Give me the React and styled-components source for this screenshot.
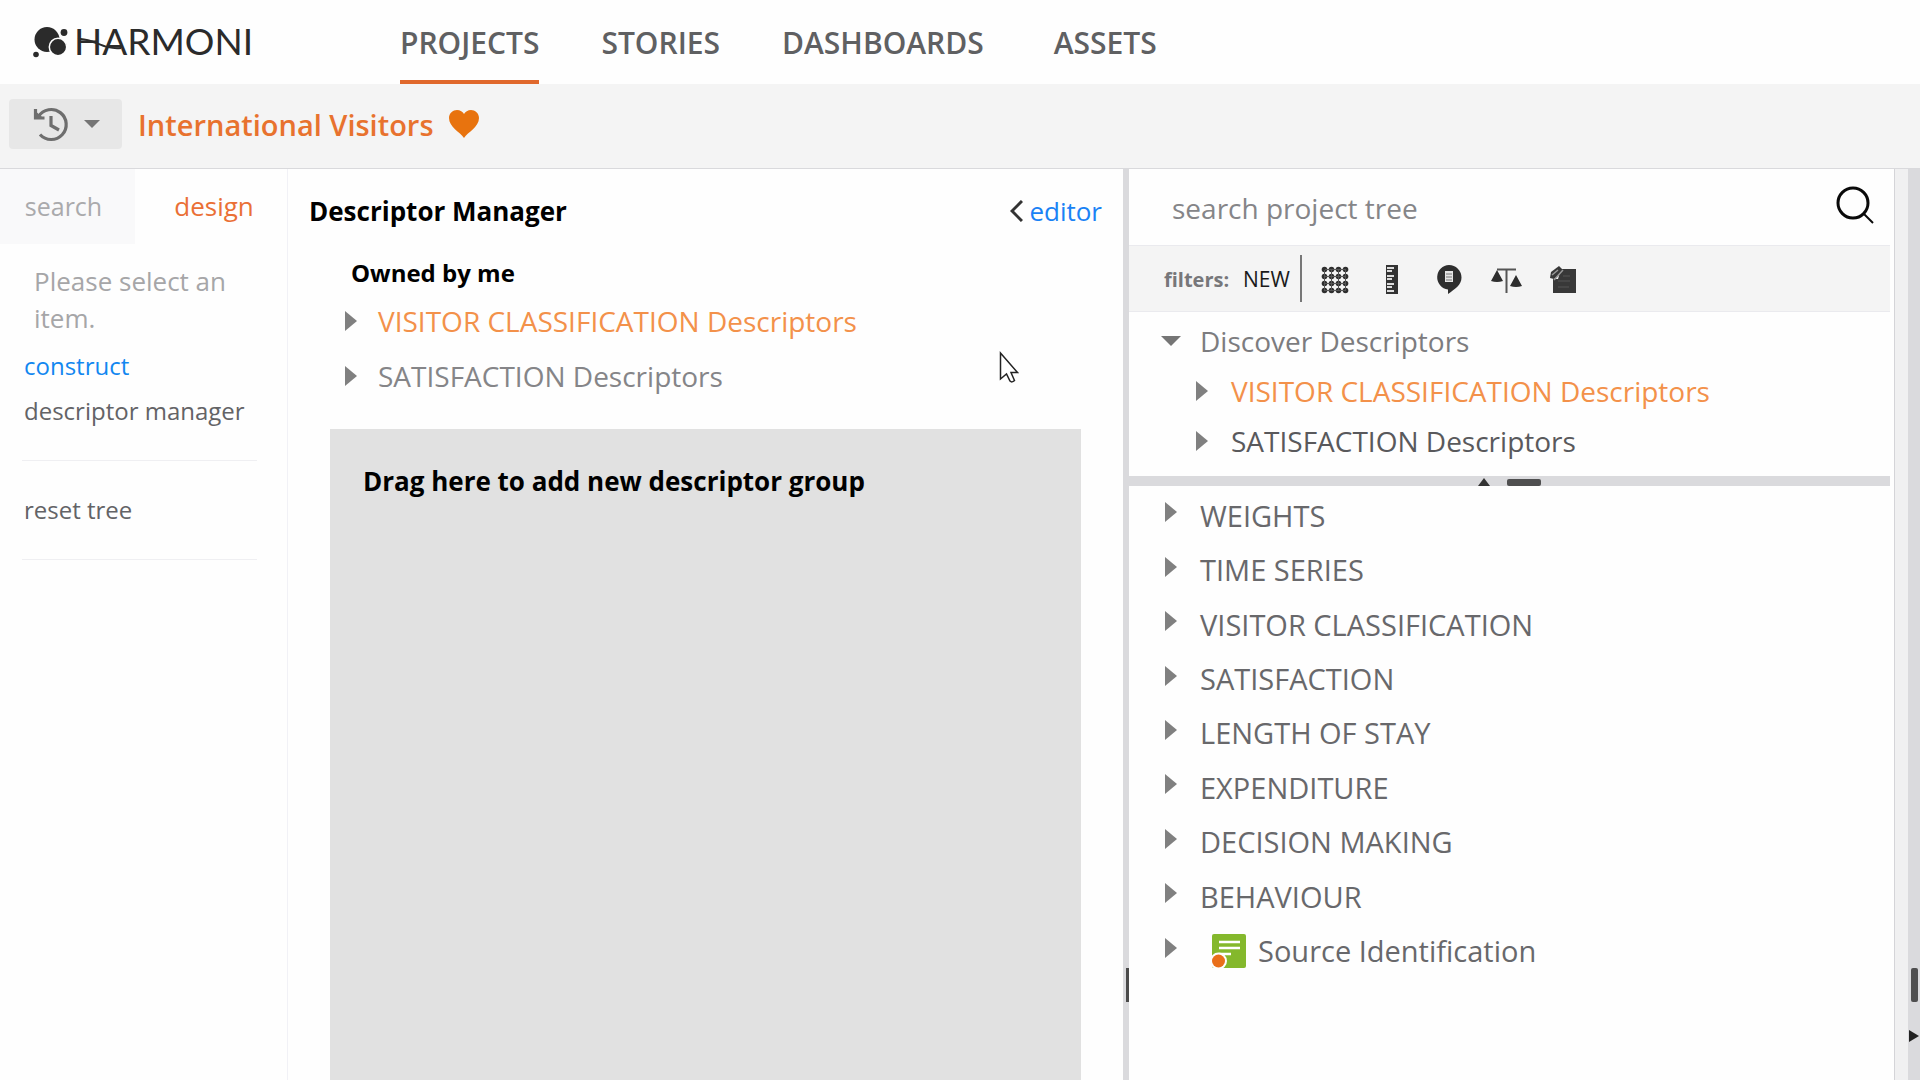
import React from "react";
import styled, { createGlobalStyle } from "styled-components";

const GlobalStyle = createGlobalStyle`
  * {
    box-sizing: border-box;
  }
  body {
    margin: 0;
    background: #fefefe;
    color: #5a5a5c;
    font-family: "Open Sans", "Noto Sans", sans-serif;
    font-size: 28px;
  }
  button,
  input {
    font: inherit;
    color: inherit;
  }
  a {
    color: inherit;
    text-decoration: none;
  }
`;

const navItems = ["PROJECTS", "STORIES", "DASHBOARDS", "ASSETS"];

const descriptors = [
  { name: "VISITOR CLASSIFICATION Descriptors", active: true },
  { name: "SATISFACTION Descriptors", active: false },
];

const folders = [
  "WEIGHTS",
  "TIME SERIES",
  "VISITOR CLASSIFICATION",
  "SATISFACTION",
  "LENGTH OF STAY",
  "EXPENDITURE",
  "DECISION MAKING",
  "BEHAVIOUR",
];

const LogoMark = () => (
  <svg width="36" height="36" viewBox="0 0 36 36" fill="#2b2b2b">
    <circle cx="14" cy="15.5" r="12.5" />
    <circle cx="25" cy="23" r="8.7" stroke="#fefefe" strokeWidth="1.5" />
    <circle cx="31" cy="8.5" r="3.4" />
    <circle cx="3" cy="30.5" r="2.8" />
  </svg>
);

const HistoryIcon = () => (
  <svg width="36" height="36" viewBox="0 0 36 36" fill="none" stroke="#6e6e6e" strokeWidth="3.2">
    <path d="M5.5 10.5A15 15 0 1 1 7 28.5" />
    <path d="M2.5 3V12H11.5" />
    <path d="M3 6V11.5H9Z" fill="#6e6e6e" strokeWidth="1" />
    <path d="M18 10V19.5L26 24" />
  </svg>
);

const Arrow = () => (
  <svg width="12" height="20" viewBox="0 0 12 20" fill="#808080">
    <path d="M0 0L12 10L0 20Z" />
  </svg>
);

const ArrowDown = ({ width = 20 }) => (
  <svg width={width} height={width / 2} viewBox="0 0 20 10" fill="#757575">
    <path d="M0 0H20L10 10Z" />
  </svg>
);

const Heart = () => (
  <svg width="30" height="28" viewBox="0 0 30 28" fill="#e8730e">
    <path d="M15 28C11 22 0 17 0 8C0 3 4 0 8 0C11 0 14 2 15 4C16 2 19 0 22 0C26 0 30 3 30 8C30 17 19 22 15 28Z" />
  </svg>
);

const Chevron = () => (
  <svg width="13" height="22" viewBox="0 0 13 22" fill="none" stroke="#333" strokeWidth="3">
    <path d="M12 1L2 11L12 21" />
  </svg>
);

const SearchIcon = () => (
  <svg width="38" height="38" viewBox="0 0 38 38" fill="none" stroke="#0a0a0a">
    <circle cx="17" cy="17" r="15" strokeWidth="3" />
    <path d="M28 28L37 37" strokeWidth="2" />
  </svg>
);

const GridIcon = () => (
  <svg width="28" height="28" viewBox="0 0 28 28" fill="#2e2e2e">
    {[3.5, 10.5, 17.5, 24.5].map((y) =>
      [3.5, 10.5, 17.5, 24.5].map((x) => <circle key={`${x}-${y}`} cx={x} cy={y} r="2.8" />)
    )}
    <path
      d="M4 3.5H25M4 10.5H25M4 17.5H25M4 24.5H25M3.5 4V25M10.5 4V25M17.5 4V25M24.5 4V25"
      stroke="#555"
    />
  </svg>
);

const RulerIcon = () => (
  <svg width="12" height="29" viewBox="0 0 12 29">
    <path d="M0 0H12V29H0Z" fill="#333" />
    <path d="M1 3H8M1 6H6M1 11H8M1 14H6M1 19H8M1 22H6M1 26H8" stroke="#ddd" strokeWidth="1.8" />
  </svg>
);

const BubbleIcon = () => (
  <svg width="26" height="29" viewBox="0 0 26 29">
    <path
      d="M13 0A12.5 12.5 0 0 1 25.5 12.5C25.5 20 19 24 12 29V24.5A12.3 12.3 0 0 1 13 0Z"
      fill="#2e2e2e"
    />
    <path d="M9 6H17V17H9Z" fill="#e4e4e4" />
    <path d="M10 9H16M10 12H16M10 15H16" stroke="#777" />
  </svg>
);

const ScalesIcon = () => (
  <svg width="31" height="26" viewBox="0 0 31 26" fill="#2e2e2e">
    <path d="M6 2.5H25M15.5 2V26" stroke="#555" strokeWidth="2" />
    <path d="M6 3L12 14Q6 16 0 14ZM25 8L31 19Q25 21 19 19Z" />
  </svg>
);

const TagIcon = () => (
  <svg width="28" height="28" viewBox="0 0 28 28">
    <path d="M12 3H27V27H4V13H9Z" fill="#383838" />
    <path d="M1 12L2 6L10 0L14 4L9 10L5 13Z" fill="#383838" />
    <path d="M5 14L14 4M3 9L9 4" stroke="#999" strokeWidth="1.5" />
    <path d="M14 10H21M9 15H21M9 21H20" stroke="#555" />
  </svg>
);

const SourceIcon = () => (
  <svg width="34" height="34" viewBox="0 0 34 34">
    <rect width="34" height="34" rx="2" fill="#84b82c" />
    <path d="M7 8H28M7 14H28M7 20H19" stroke="#fff" strokeWidth="2.5" />
    <circle cx="6.5" cy="27" r="8.5" fill="#fefefe" />
    <circle cx="6.5" cy="27" r="6.5" fill="#e96f1a" />
  </svg>
);

const App = () => {
  return (
    <Page>
      <GlobalStyle />
      <Header>
        <Brand href="#home">
          <LogoMark />
          <BrandName>HARMONI</BrandName>
          <Swoosh width="48" height="12" viewBox="0 0 48 12" fill="none">
            <path d="M1 1C16 0 26 12 44 10" stroke="#2b2b2b" strokeWidth="2" />
          </Swoosh>
        </Brand>
        <Nav>
          {navItems.map((item) => (
            <NavLink key={item} href={`#${item.toLowerCase()}`} $active={item === "PROJECTS"}>
              {item}
            </NavLink>
          ))}
        </Nav>
      </Header>

      <ProjectBar>
        <HistoryButton aria-label="History">
          <HistoryIcon />
          <ArrowDown width={16} />
        </HistoryButton>
        <ProjectName>International Visitors</ProjectName>
        <Heart />
      </ProjectBar>

      <Workspace>
        <Sidebar>
          <Tabs>
            <Tab>search</Tab>
            <Tab $active>design</Tab>
          </Tabs>
          <Hint>Please select an item.</Hint>
          <SideLink href="#construct" $active>
            construct
          </SideLink>
          <SideLink href="#descriptors">descriptor manager</SideLink>
          <Rule />
          <SideLink href="#reset">reset tree</SideLink>
          <Rule />
        </Sidebar>

        <Manager>
          <ManagerHeader>
            <Title>Descriptor Manager</Title>
            <EditorLink href="#editor">
              <Chevron />
              editor
            </EditorLink>
          </ManagerHeader>
          <Subtitle>Owned by me</Subtitle>
          <OwnedList>
            {descriptors.map((d) => (
              <OwnedItem key={d.name} $active={d.active}>
                <Arrow />
                {d.name}
              </OwnedItem>
            ))}
          </OwnedList>
          <DropZone>Drag here to add new descriptor group</DropZone>
          <Cursor width="20" height="34" viewBox="0 0 20 34">
            <path
              d="M1.5 2V28L7.5 23L11 30Q13 32 15.5 29.5L12 21.5H18.5Z"
              fill="#fff"
              stroke="#222"
              strokeWidth="1.5"
            />
          </Cursor>
        </Manager>

        <Splitter>
          <SplitGrip />
        </Splitter>

        <ProjectTree>
          <SearchRow>
            <SearchInput type="text" aria-label="search project tree" placeholder="search project tree" />
            <IconButton aria-label="Search">
              <SearchIcon />
            </IconButton>
          </SearchRow>
          <Filters>
            <FilterLabel>filters:</FilterLabel>
            <NewButton>NEW</NewButton>
            <FilterIcons>
              <FilterButton aria-label="Grid">
                <GridIcon />
              </FilterButton>
              <FilterButton aria-label="Measures">
                <RulerIcon />
              </FilterButton>
              <FilterButton aria-label="Comments">
                <BubbleIcon />
              </FilterButton>
              <FilterButton aria-label="Weights">
                <ScalesIcon />
              </FilterButton>
              <FilterButton aria-label="Tags">
                <TagIcon />
              </FilterButton>
            </FilterIcons>
          </Filters>
          <Discover>
            <DiscoverRow>
              <ArrowDown />
              Discover Descriptors
            </DiscoverRow>
            {descriptors.map((d) => (
              <DiscoverChild key={d.name} $active={d.active}>
                <Arrow />
                {d.name}
              </DiscoverChild>
            ))}
          </Discover>
          <RowSplitter>
            <svg width="12" height="8" viewBox="0 0 12 8" fill="#333">
              <path d="M6 0L12 8H0Z" />
            </svg>
            <RowGrip />
          </RowSplitter>
          <Folders>
            {folders.map((name) => (
              <Folder key={name}>
                <FolderArrow>
                  <Arrow />
                </FolderArrow>
                {name}
              </Folder>
            ))}
            <Folder>
              <FolderArrow>
                <Arrow />
              </FolderArrow>
              <SourceLabel>
                <SourceIcon />
                Source Identification
              </SourceLabel>
            </Folder>
          </Folders>
        </ProjectTree>

        <Gutter />
        <Rail>
          <RailGrip />
          <svg width="10" height="12" viewBox="0 0 10 12" fill="#222">
            <path d="M0 0L10 6L0 12Z" />
          </svg>
        </Rail>
      </Workspace>
    </Page>
  );
};

export default App;

const Page = styled.div`
  display: flex;
  flex-direction: column;
  min-height: 100vh;
`;

const Header = styled.header`
  display: flex;
  height: 84px;
  padding-left: 33px;
`;

const Brand = styled.a`
  position: relative;
  display: flex;
  align-items: center;
  gap: 5px;
  width: 367px;
  color: #2b2b2b;
`;

const BrandName = styled.span`
  padding-bottom: 3px;
  font-family: Lato, sans-serif;
  font-size: 37px;
`;

const Swoosh = styled.svg`
  position: absolute;
  left: 44px;
  top: 38px;
`;

const Nav = styled.nav`
  display: flex;
  gap: 62px;
`;

const NavLink = styled.a`
  display: flex;
  align-items: center;
  padding-top: 4px;
  border-bottom: 4px solid ${(props) => (props.$active ? "#e0682c" : "transparent")};
  color: #5f6062;
  font-size: 30px;
  font-weight: 600;

  &:last-child {
    margin-left: 8px;
  }
`;

const ProjectBar = styled.div`
  display: flex;
  align-items: center;
  height: 85px;
  padding: 0 9px 4px;
  border-bottom: 1px solid #d9d9dc;
  background: #f4f4f4;
`;

const HistoryButton = styled.button`
  display: flex;
  align-items: center;
  justify-content: flex-end;
  gap: 15px;
  width: 113px;
  height: 50px;
  padding: 0 22px;
  border: 0;
  border-radius: 4px;
  background: #e7e7e7;
`;

const ProjectName = styled.h1`
  margin: 0 15px 0 16px;
  color: #e8722e;
  font-size: 29px;
  font-weight: 600;
`;

const Workspace = styled.div`
  display: flex;
  flex: 1;
`;

const Sidebar = styled.aside`
  display: flex;
  flex-direction: column;
  width: 288px;
  border-right: 1px solid #f1f1f6;
  font-size: 24px;
`;

const Tabs = styled.div`
  display: flex;
  height: 75px;
`;

const Tab = styled.button`
  width: ${(props) => (props.$active ? "152px" : "135px")};
  padding: ${(props) => (props.$active ? "0 0 2px 6px" : "0 8px 2px 0")};
  border: 0;
  background: ${(props) => (props.$active ? "transparent" : "#f9f9fa")};
  color: ${(props) => (props.$active ? "#ea7036" : "#aaaaac")};
  font-size: ${(props) => (props.$active ? "26px" : "25px")};
`;

const Hint = styled.p`
  margin: 19px 30px 6px 34px;
  color: #a6a6a8;
  font-size: 26px;
  line-height: 37px;
`;

const SideLink = styled.a`
  padding-left: 24px;
  color: ${(props) => (props.$active ? "#1287f0" : "#636366")};
  line-height: 45px;
`;

const Rule = styled.hr`
  width: 235px;
  margin: 27px 0 26px 22px;
  border: 0;
  border-top: 1px solid #efeff2;
`;

const Manager = styled.main`
  position: relative;
  display: flex;
  flex: 835;
  flex-direction: column;
`;

const ManagerHeader = styled.div`
  display: flex;
  align-items: center;
  justify-content: space-between;
  height: 86px;
  padding: 0 21px 2px;
`;

const Title = styled.h2`
  margin: 0;
  color: #000;
  font-size: 26px;
  font-weight: 700;
`;

const EditorLink = styled.a`
  display: flex;
  align-items: center;
  gap: 6px;
  color: #1a82f5;
  font-size: 26px;
`;

const Subtitle = styled.h3`
  margin: 0 0 2px 63px;
  color: #000;
  font-size: 24px;
  font-weight: 700;
  line-height: 36px;
`;

const OwnedList = styled.ul`
  margin: 0 0 26px;
  padding: 0 0 0 57px;
  list-style: none;
`;

const OwnedItem = styled.li`
  display: flex;
  align-items: center;
  gap: 21px;
  height: 55px;
  color: ${(props) => (props.$active ? "#f3914a" : "#858588")};
`;

const DropZone = styled.section`
  flex: 1;
  margin: 0 42px;
  padding: 35px 33px;
  background: #e1e1e1;
  color: #000;
  font-size: 26px;
  font-weight: 700;
  line-height: 34px;
`;

const Cursor = styled.svg`
  position: absolute;
  left: 711px;
  top: 182px;
`;

const Splitter = styled.div`
  display: flex;
  flex-direction: column;
  align-items: flex-end;
  justify-content: flex-end;
  width: 6px;
  padding-bottom: 78px;
  background: #dadadd;
`;

const SplitGrip = styled.div`
  width: 3px;
  height: 34px;
  background: #4a4a4a;
`;

const ProjectTree = styled.section`
  flex: 761;
  padding-right: 4px;
`;

const SearchRow = styled.div`
  display: flex;
  align-items: center;
  height: 76px;
  padding: 0 16px 4px 43px;
`;

const SearchInput = styled.input`
  flex: 1;
  padding: 6px 0 0;
  border: 0;
  outline: 0;
  background: transparent;

  &::placeholder {
    color: #858588;
  }
`;

const IconButton = styled.button`
  display: flex;
  align-items: center;
  justify-content: center;
  padding: 0;
  border: 0;
  background: transparent;
  cursor: pointer;
`;

const Filters = styled.div`
  display: flex;
  align-items: center;
  height: 67px;
  padding-left: 35px;
  border: 1px solid #eaeaee;
  border-width: 1px 0;
  background: #f4f4f4;
`;

const FilterLabel = styled.span`
  width: 79px;
  padding-top: 2px;
  color: #77777a;
  font-size: 20px;
  font-weight: 700;
`;

const NewButton = styled.button`
  height: 47px;
  padding: 0 10px 0 0;
  border: 0;
  border-right: 2px solid #777;
  background: transparent;
  color: #1a1a1a;
  font-size: 21px;
`;

const FilterIcons = styled.div`
  display: flex;
  padding: 2px 0 0 5px;
`;

const FilterButton = styled(IconButton)`
  width: 57px;
  height: 32px;
`;

const Discover = styled.div`
  padding: 4px 0 10px;
`;

const DiscoverRow = styled.div`
  display: flex;
  align-items: center;
  gap: 19px;
  height: 50px;
  padding-left: 32px;
  color: #7c7c7f;
`;

const DiscoverChild = styled(DiscoverRow)`
  gap: 23px;
  padding-left: 67px;
  color: ${(props) => (props.$active ? "#f3914a" : "#59595c")};
`;

const RowSplitter = styled.div`
  display: flex;
  align-items: flex-end;
  justify-content: center;
  gap: 17px;
  height: 10px;
  background: #dadadd;
`;

const RowGrip = styled.div`
  width: 34px;
  height: 7px;
  border-radius: 2px;
  background: #4f4f50;
`;

const Folders = styled.ul`
  display: grid;
  grid-auto-rows: 1fr;
  height: 492px;
  margin: 0;
  padding: 2px 0 0 36px;
  list-style: none;
`;

const Folder = styled.li`
  display: flex;
  align-items: center;
  gap: 23px;
  color: #68686b;
  font-size: 29px;
`;

const FolderArrow = styled.span`
  display: flex;
  padding-bottom: 6px;
`;

const SourceLabel = styled.span`
  display: flex;
  align-items: center;
  gap: 12px;
  padding-left: 12px;
`;

const Gutter = styled.div`
  width: 14px;
  border-left: 1px solid #d4d4d8;
  background: #f0f0f1;
`;

const Rail = styled.div`
  display: flex;
  flex-direction: column;
  align-items: center;
  justify-content: flex-end;
  gap: 28px;
  width: 12px;
  padding-bottom: 38px;
  background: #dadadd;
`;

const RailGrip = styled.div`
  width: 7px;
  height: 34px;
  border-radius: 2px;
  background: #4f4f50;
`;
